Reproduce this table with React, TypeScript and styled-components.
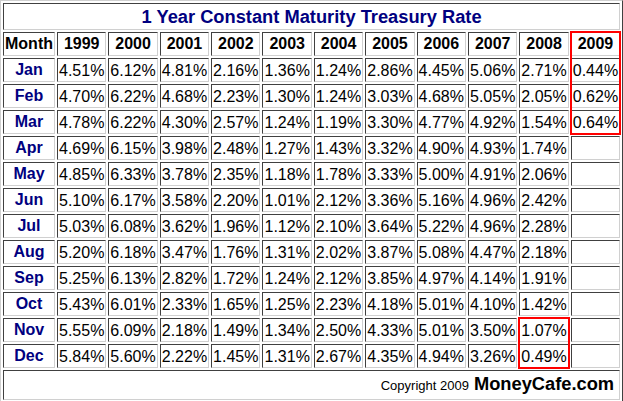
import React from "react";
import styled, { createGlobalStyle, css } from "styled-components";

const Global = createGlobalStyle`
  html, body { margin: 0; padding: 0; background: #ffffff; }
  body { font-family: "Liberation Sans", Arial, sans-serif; }
`;

const Table = styled.table`
  width: 623px;
  border-collapse: separate;
  border-spacing: 2px;
  border: 1px solid;
  border-color: #d0d0d0 #404040 #404040 #d0d0d0;
  font-family: "Liberation Sans", Arial, sans-serif;
  background: #ffffff;
`;

const cellBorder = css`
  border: 1px solid;
  border-color: #404040 #d0d0d0 #d0d0d0 #404040;
`;

const TitleCell = styled.td`
  ${cellBorder};
  padding: 1px;
  line-height: 23px;
  font-size: 18.3px;
  font-weight: bold;
  color: #000080;
  text-align: center;
`;

type Hl = { $top?: boolean; $bottom?: boolean; $mark?: boolean };

const RED = "#ff0000";

const highlight = css<Hl>`
  ${(p) =>
    p.$mark &&
    css`
      position: relative;
      &::after {
        content: "";
        position: absolute;
        top: -2px;
        bottom: -2px;
        left: -2px;
        right: -2px;
        border-left: 2px solid ${RED};
        border-right: 2px solid ${RED};
        border-top: ${p.$top ? `2px solid ${RED}` : "none"};
        border-bottom: ${p.$bottom ? `2px solid ${RED}` : "none"};
        pointer-events: none;
      }
    `}
`;

const HeadCell = styled.td<Hl>`
  ${cellBorder};
  padding: 1px;
  line-height: 20px;
  font-size: 16px;
  font-weight: bold;
  color: #000000;
  text-align: center;
  ${highlight};
`;

const MonthCell = styled.td`
  ${cellBorder};
  padding: 1px;
  line-height: 20px;
  font-size: 16px;
  font-weight: bold;
  color: #000080;
  text-align: center;
`;

const DataCell = styled.td<Hl>`
  ${cellBorder};
  padding: 2px 1px 0 1px;
  line-height: 20px;
  font-size: 16px;
  color: #000000;
  text-align: left;
  white-space: nowrap;
  ${highlight};
`;

const FooterCell = styled.td`
  ${cellBorder};
  padding: 1px 5px 1px 1px;
  line-height: 24px;
  text-align: right;
  white-space: nowrap;
`;

const Copyright = styled.span`
  font-size: 13px;
  color: #000000;
`;

const Brand = styled.span`
  font-size: 18.3px;
  font-weight: bold;
  color: #000000;
  margin-left: 5px;
`;

const years = ["1999", "2000", "2001", "2002", "2003", "2004", "2005", "2006", "2007", "2008", "2009"];

const rows: [string, string[]][] = [
  ["Jan", ["4.51", "6.12", "4.81", "2.16", "1.36", "1.24", "2.86", "4.45", "5.06", "2.71", "0.44"]],
  ["Feb", ["4.70", "6.22", "4.68", "2.23", "1.30", "1.24", "3.03", "4.68", "5.05", "2.05", "0.62"]],
  ["Mar", ["4.78", "6.22", "4.30", "2.57", "1.24", "1.19", "3.30", "4.77", "4.92", "1.54", "0.64"]],
  ["Apr", ["4.69", "6.15", "3.98", "2.48", "1.27", "1.43", "3.32", "4.90", "4.93", "1.74", ""]],
  ["May", ["4.85", "6.33", "3.78", "2.35", "1.18", "1.78", "3.33", "5.00", "4.91", "2.06", ""]],
  ["Jun", ["5.10", "6.17", "3.58", "2.20", "1.01", "2.12", "3.36", "5.16", "4.96", "2.42", ""]],
  ["Jul", ["5.03", "6.08", "3.62", "1.96", "1.12", "2.10", "3.64", "5.22", "4.96", "2.28", ""]],
  ["Aug", ["5.20", "6.18", "3.47", "1.76", "1.31", "2.02", "3.87", "5.08", "4.47", "2.18", ""]],
  ["Sep", ["5.25", "6.13", "2.82", "1.72", "1.24", "2.12", "3.85", "4.97", "4.14", "1.91", ""]],
  ["Oct", ["5.43", "6.01", "2.33", "1.65", "1.25", "2.23", "4.18", "5.01", "4.10", "1.42", ""]],
  ["Nov", ["5.55", "6.09", "2.18", "1.49", "1.34", "2.50", "4.33", "5.01", "3.50", "1.07", ""]],
  ["Dec", ["5.84", "5.60", "2.22", "1.45", "1.31", "2.67", "4.35", "4.94", "3.26", "0.49", ""]],
];

function markFor(rowIdx: number, colIdx: number): Hl {
  // 2009 column, Jan-Mar
  if (colIdx === 10 && rowIdx <= 2) {
    return { $mark: true, $bottom: rowIdx === 2 };
  }
  // 2008 column, Nov-Dec
  if (colIdx === 9 && rowIdx >= 10) {
    return { $mark: true, $top: rowIdx === 10, $bottom: rowIdx === 11 };
  }
  return {};
}

export default function App() {
  return (
    <>
      <Global />
      <Table>
        <tbody>
          <tr>
            <TitleCell colSpan={12}>1 Year Constant Maturity Treasury Rate</TitleCell>
          </tr>
          <tr>
            <HeadCell>Month</HeadCell>
            {years.map((y) => (
              <HeadCell key={y} $mark={y === "2009"} $top={y === "2009"}>
                {y}
              </HeadCell>
            ))}
          </tr>
          {rows.map(([m, vals], r) => (
            <tr key={m}>
              <MonthCell>{m}</MonthCell>
              {vals.map((v, c) => (
                <DataCell key={c} {...markFor(r, c)}>
                  {v ? `${v}%` : "\u00a0"}
                </DataCell>
              ))}
            </tr>
          ))}
          <tr>
            <FooterCell colSpan={12}>
              <Copyright>Copyright 2009</Copyright>
              <Brand>MoneyCafe.com</Brand>
            </FooterCell>
          </tr>
        </tbody>
      </Table>
    </>
  );
}
